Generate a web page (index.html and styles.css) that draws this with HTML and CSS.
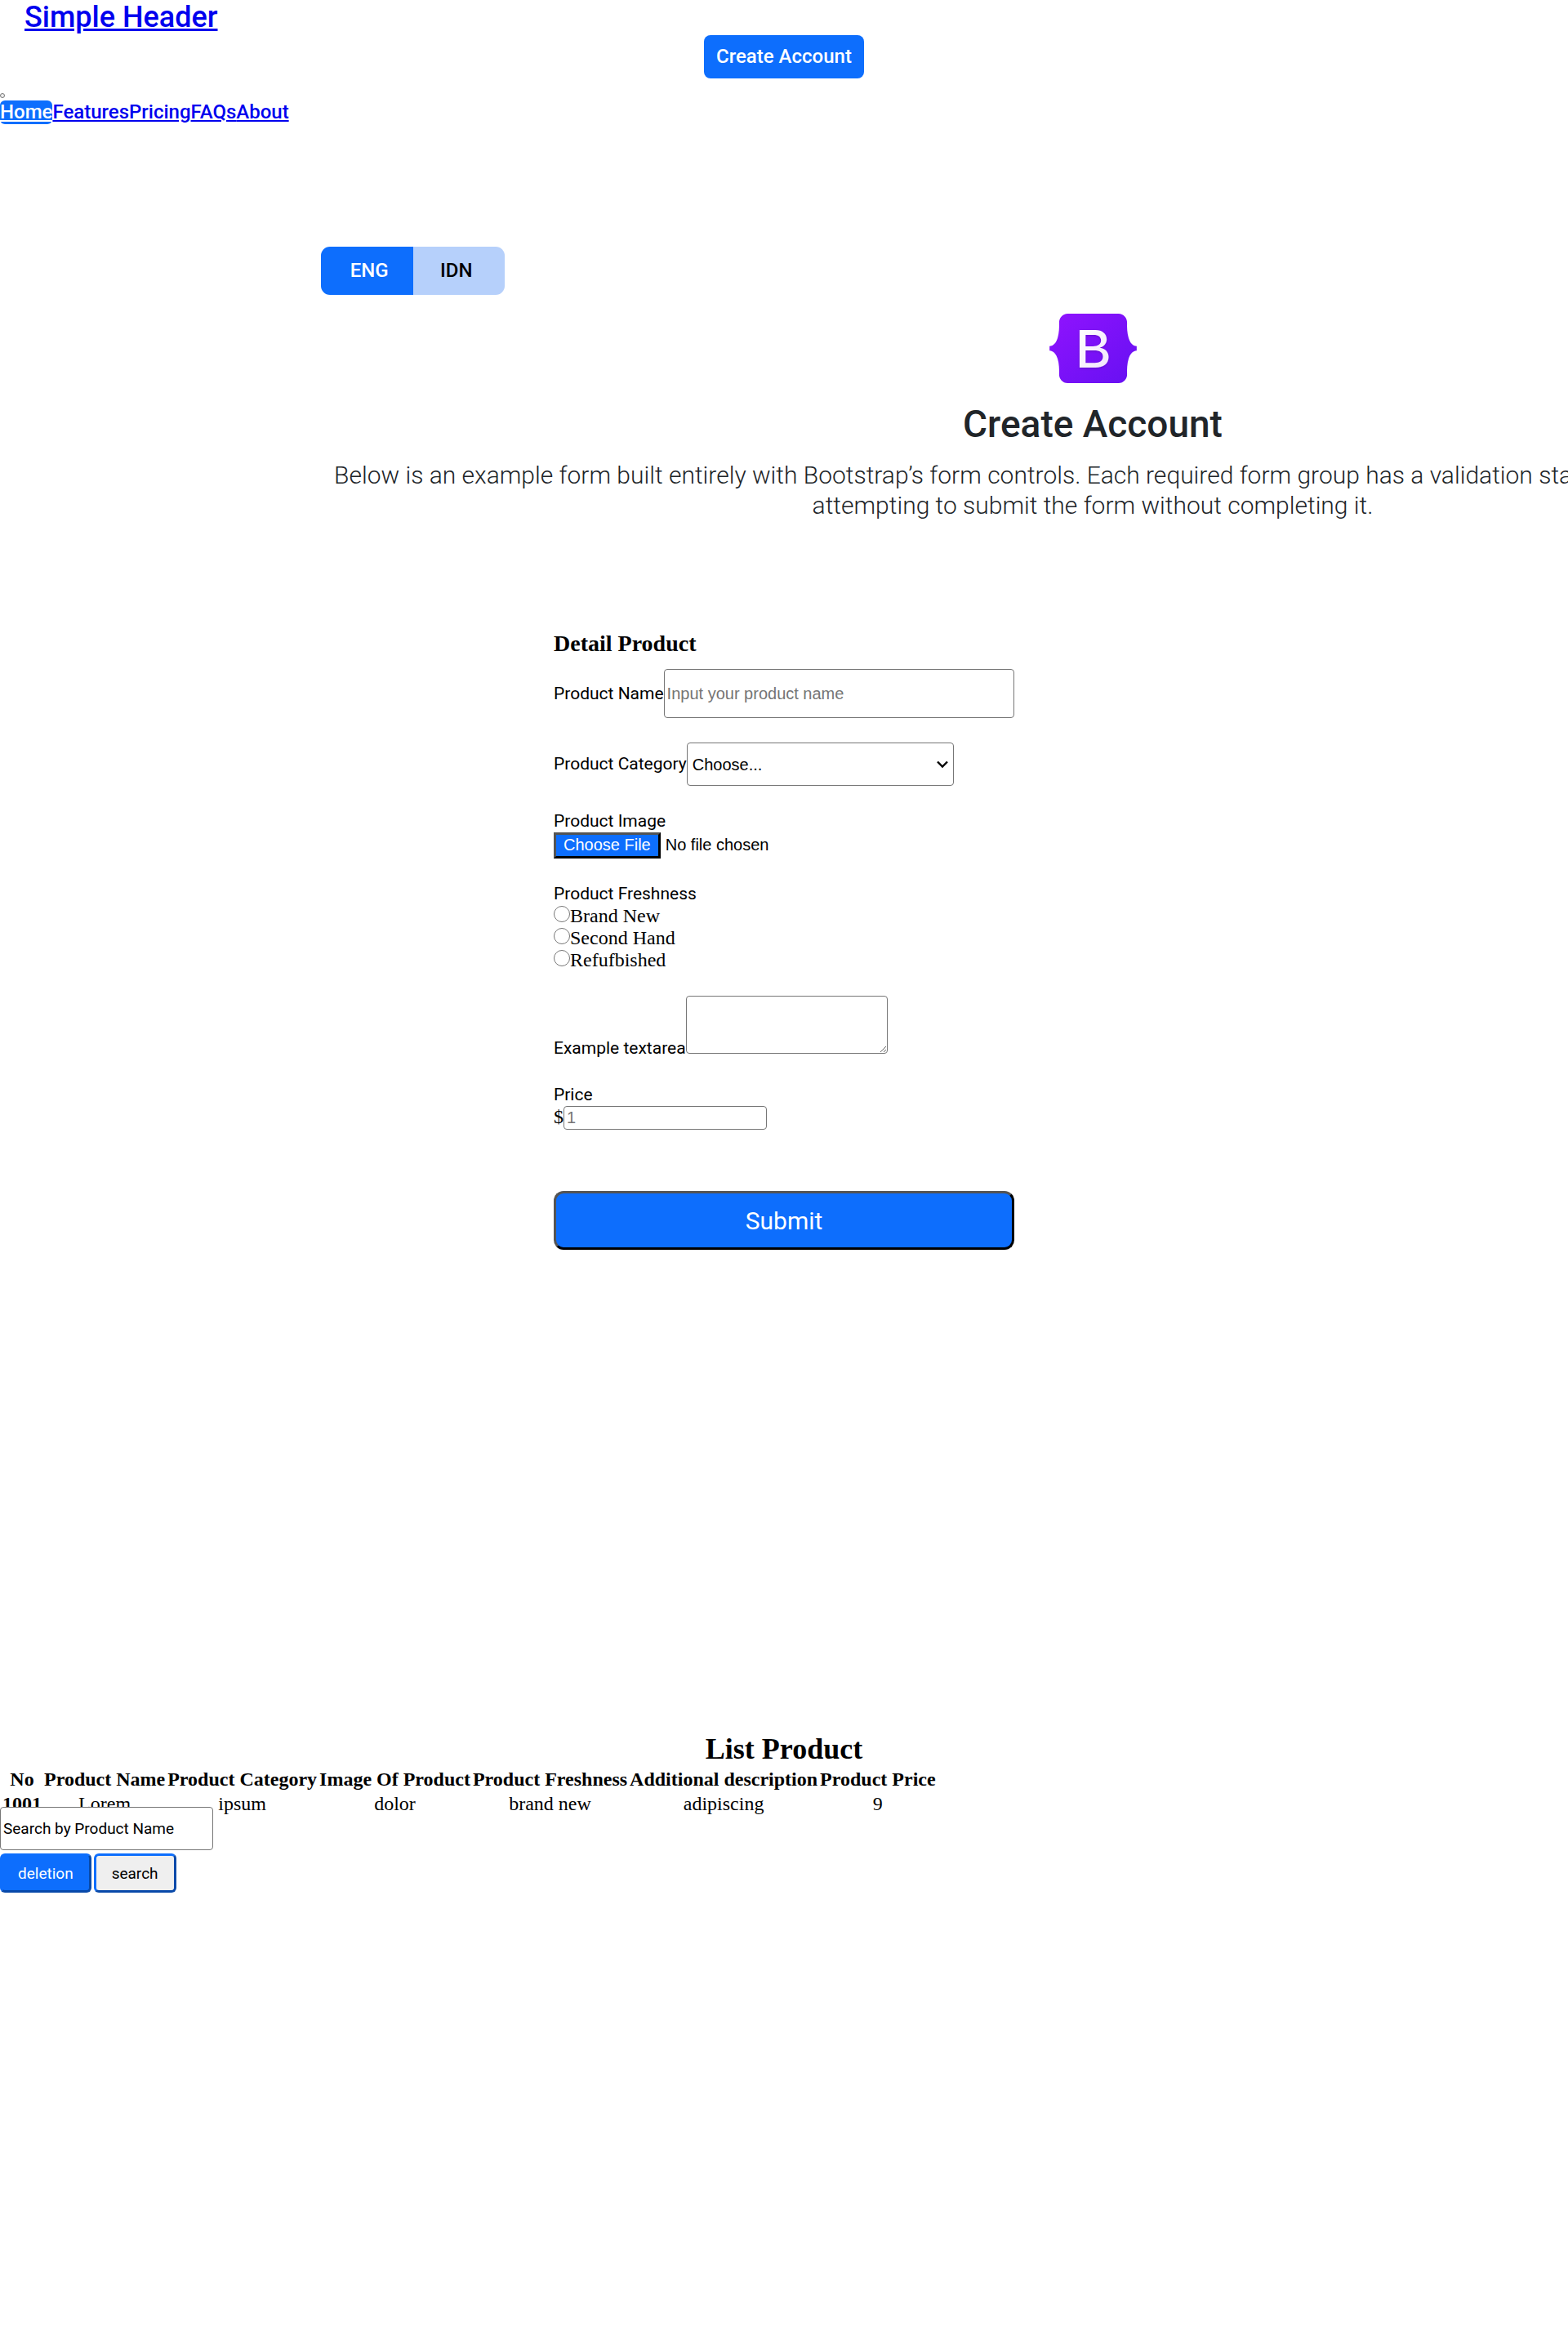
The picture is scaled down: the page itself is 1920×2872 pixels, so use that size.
FILE: index.html
```html
<!DOCTYPE html>
<html lang="en">
<head>
<meta charset="utf-8">
<title>Create Account</title>
<link rel="stylesheet" href="styles.css">
</head>
<body>
<header class="header">
  <a class="brand" href="#">Simple Header</a>
  <button class="create-button" type="button">Create Account</button>
  <button class="menu-toggle" type="button" aria-label="Toggle navigation"></button>
  <nav class="nav">
    <a class="nav-link active" href="#">Home</a>
    <a class="nav-link" href="#">Features</a>
    <a class="nav-link" href="#">Pricing</a>
    <a class="nav-link" href="#">FAQs</a>
    <a class="nav-link" href="#">About</a>
  </nav>
</header>

<main class="main">
  <section class="intro">
    <div class="language">
      <button class="language-button selected" type="button">ENG</button>
      <button class="language-button" type="button">IDN</button>
    </div>
    <div class="intro-text">
      <svg class="logo" viewBox="0 0 118 94" role="img" aria-label="Bootstrap">
        <defs>
          <linearGradient id="shell" x1="0" y1="0" x2="1" y2="1">
            <stop offset="0" stop-color="#9013fe"/>
            <stop offset="1" stop-color="#6610f2"/>
          </linearGradient>
          <linearGradient id="letter" x1="0" y1="0" x2="1" y2="1">
            <stop offset="0" stop-color="#ffffff"/>
            <stop offset="1" stop-color="#f1e5fc"/>
          </linearGradient>
          <filter id="shade" x="-20%" y="-20%" width="140%" height="140%">
            <feDropShadow dx="0" dy="1" stdDeviation="2" flood-color="#000000" flood-opacity="0.2"/>
          </filter>
        </defs>
        <path fill="url(#shell)" d="M24.509 0c-6.733 0-11.715 5.893-11.492 12.284.214 6.14-.064 14.092-2.066 20.577C8.943 39.365 5.547 43.485 0 44.014v5.972c5.547.529 8.943 4.649 10.951 11.153 2.002 6.485 2.28 14.437 2.066 20.577C12.794 88.106 17.776 94 24.51 94H93.5c6.733 0 11.714-5.893 11.491-12.284-.214-6.14.064-14.092 2.066-20.577 2.009-6.504 5.396-10.624 10.943-11.153v-5.972c-5.547-.529-8.934-4.649-10.943-11.153-2.002-6.484-2.28-14.437-2.066-20.577C105.214 5.894 100.233 0 93.5 0z"/>
        <path fill="url(#letter)" filter="url(#shade)" fill-rule="evenodd" d="M62.1 73C73.2 73 80 67.5 80 58.6c0-6.7-4.8-11.6-11.8-12.4v-.3c5.200-.8 9.200-5.600 9.200-11 0-7.700-6.100-12.700-15.300-12.700H40.700V73zM48.800 28.700h11.300c6.100 0 9.600 2.700 9.600 7.500 0 5.100-3.900 7.900-11 7.900h-9.900zM48.800 66.600V49.800h11.800c7.700 0 11.700 2.800 11.700 8.300s-3.900 8.500-11.200 8.500z"/>
      </svg>
      <h2 class="intro-title">Create Account</h2>
      <p class="lead">Below is an example form built entirely with Bootstrap’s form controls. Each required form group has a validation state that can be triggered by attempting to submit the form without completing it.</p>
    </div>
  </section>

  <form class="product-form">
    <h3 class="form-title">Detail Product</h3>
    <div class="field-row">
      <label class="label" for="name">Product Name</label>
      <input class="text-input" id="name" type="text" placeholder="Input your product name">
    </div>
    <div class="field-row">
      <label class="label" for="category">Product Category</label>
      <select class="select" id="category"><option>Choose...</option></select>
    </div>
    <div class="field">
      <label class="label" for="image">Product Image</label>
      <input class="file-input" id="image" type="file">
    </div>
    <div class="field" role="radiogroup" aria-labelledby="freshness">
      <span class="label" id="freshness">Product Freshness</span>
      <label class="choice"><input class="radio" type="radio" name="freshness">Brand New</label>
      <label class="choice"><input class="radio" type="radio" name="freshness">Second Hand</label>
      <label class="choice"><input class="radio" type="radio" name="freshness">Refufbished</label>
    </div>
    <div class="notes-row">
      <label class="label" for="notes">Example textarea</label><textarea class="textarea" id="notes"></textarea>
    </div>
    <div class="field">
      <label class="label" for="price">Price</label>
      <div class="price-row"><span>$</span><input class="price-input" id="price" type="text" placeholder="1"></div>
    </div>
    <button class="submit" type="submit">Submit</button>
  </form>

  <section class="list">
    <h2 class="list-title">List Product</h2>
    <div class="table-box">
      <table class="table">
        <thead>
          <tr><th>No</th><th>Product Name</th><th>Product Category</th><th>Image Of Product</th><th>Product Freshness</th><th>Additional description</th><th>Product Price</th></tr>
        </thead>
        <tbody>
          <tr><th>1001</th><td>Lorem</td><td>ipsum</td><td>dolor</td><td>brand new</td><td>adipiscing</td><td>9</td></tr>
        </tbody>
      </table>
    </div>
    <form class="search-form">
      <input class="search-input" type="text" aria-label="Search by Product Name" placeholder="Search by Product Name">
      <div class="actions">
        <button class="action filled" type="button">deletion</button>
        <button class="action" type="button">search</button>
      </div>
    </form>
  </section>
</main>
</body>
</html>
```
FILE: styles.css
```css
* {
  box-sizing: border-box;
}

body {
  min-height: 100vh;
  margin: 0;
  background: #fff;
  color: #000;
  font-family: "Liberation Serif", serif;
  font-size: 24px;
  line-height: 27px;
}

h2, h3, p {
  margin: 0;
}

button, input, select, textarea {
  margin: 0;
  font-family: "Liberation Sans", sans-serif;
  font-size: 20px;
}

.header {
  display: flex;
  flex-direction: column;
  align-items: flex-start;
  font-family: Roboto, sans-serif;
  font-weight: 500;
}

.brand {
  margin-left: 30px;
  color: #0000ee;
  font-size: 36px;
  line-height: 43px;
}

.create-button {
  align-self: center;
  padding: 12px 15px;
  border: 0;
  border-radius: 8px;
  background: #0d6efd;
  color: #fff;
  font-family: Roboto, sans-serif;
  font-size: 24px;
  font-weight: 500;
  line-height: 29px;
}

.menu-toggle {
  width: 6px;
  height: 6px;
  margin-top: 18px;
  padding: 0;
  border: 1px solid #767676;
  border-radius: 3px;
  background: #efefef;
}

.nav {
  display: flex;
  margin-top: 3px;
  line-height: 29px;
}

.nav-link {
  color: #0000ee;
}

.nav-link.active {
  border-radius: 6px;
  background: #0d6efd;
  color: #fff;
}

.main {
  overflow-x: clip;
}

.intro {
  margin: 150px 0 0 393px;
}

.language {
  display: flex;
  width: 225px;
  overflow: hidden;
  border-radius: 11px;
}

.language-button {
  flex: 1;
  padding: 15px 6px 15px 0;
  border: 0;
  background: #b6d0fb;
  color: #000;
  font-family: Roboto, sans-serif;
  font-size: 24px;
  font-weight: 500;
  line-height: 29px;
}

.language-button.selected {
  padding: 15px 0 15px 6px;
  background: #0d6efd;
  color: #fff;
}

.intro-text {
  width: calc(100vw - 30px);
  margin-top: 23px;
  color: #212529;
  font-family: Roboto, sans-serif;
  text-align: center;
}

.logo {
  display: block;
  width: 107px;
  height: 85px;
  margin: 0 auto 21px;
}

.intro-title {
  font-size: 46px;
  font-weight: 500;
  line-height: 58px;
}

.lead {
  margin-top: 15px;
  font-size: 30px;
  font-weight: 300;
  line-height: 37px;
}

.product-form {
  display: flex;
  flex-direction: column;
  gap: 30px;
  max-width: 564px;
  margin: 135px auto 0;
}

.form-title {
  margin-bottom: -15px;
  font-size: 28px;
  line-height: 32px;
}

.label {
  font-family: Roboto, sans-serif;
  font-size: 21px;
}

.field-row {
  display: flex;
  align-items: center;
}

.field {
  display: flex;
  flex-direction: column;
  align-items: flex-start;
}

.text-input,
.select,
.textarea,
.price-input,
.search-input {
  border: 1px solid #767676;
  border-radius: 4px;
  background-color: #fff;
}

.text-input {
  flex: 1;
  min-width: 0;
  height: 60px;
  padding: 0 3px;
}

.select {
  width: 327px;
  height: 53px;
  padding: 0 6px;
  appearance: none;
  color: #000;
  background-image: url("data:image/svg+xml,%3Csvg xmlns='http://www.w3.org/2000/svg' viewBox='0 0 14 10'%3E%3Cpath d='M1 1.500l6 6 6-6' fill='none' stroke='%23000' stroke-width='2.400'/%3E%3C/svg%3E");
  background-repeat: no-repeat;
  background-position: right 6px center;
  background-size: 14px 10px;
}

.file-input {
  height: 32px;
}

.file-input::file-selector-button {
  height: 32px;
  margin-right: 6px;
  padding: 0 9px 2px;
  border: 3px outset #000;
  background: #0d6efd;
  color: #fff;
  font-family: "Liberation Sans", sans-serif;
  font-size: 20px;
}

.choice {
  display: flex;
  align-items: flex-start;
}

.radio {
  width: 20px;
  height: 20px;
  margin-top: 1px;
}

.textarea {
  width: 247px;
  height: 71px;
  vertical-align: baseline;
}

.price-row {
  display: flex;
}

.price-input {
  width: 249px;
  height: 29px;
  padding: 0 3px;
}

.submit {
  height: 72px;
  margin-top: 45px;
  border: 3px outset #000;
  border-radius: 12px;
  background: #0d6efd;
  color: #fff;
  font-family: Roboto, sans-serif;
  font-size: 30px;
}

.list {
  margin-top: 590px;
}

.list-title {
  font-size: 36px;
  line-height: 42px;
  text-align: center;
}

.table-box {
  height: 50px;
}

.table {
  border-spacing: 3px;
  text-align: center;
  white-space: nowrap;
}

.table th,
.table td {
  padding: 0;
}

.search-input {
  display: block;
  position: relative;
  width: 261px;
  height: 53px;
  padding: 0 3px;
  font-family: Roboto, sans-serif;
  font-size: 19px;
}

.search-input::placeholder {
  color: #000;
}

.actions {
  display: flex;
  gap: 3px;
  margin-top: 4px;
}

.action {
  height: 48px;
  padding: 0 19px;
  border: 3px outset #0d6efd;
  border-radius: 6px;
  background: #efefef;
  color: #000;
  font-family: Roboto, sans-serif;
  font-size: 19px;
}

.action.filled {
  background: #0d6efd;
  color: #fff;
}
```
